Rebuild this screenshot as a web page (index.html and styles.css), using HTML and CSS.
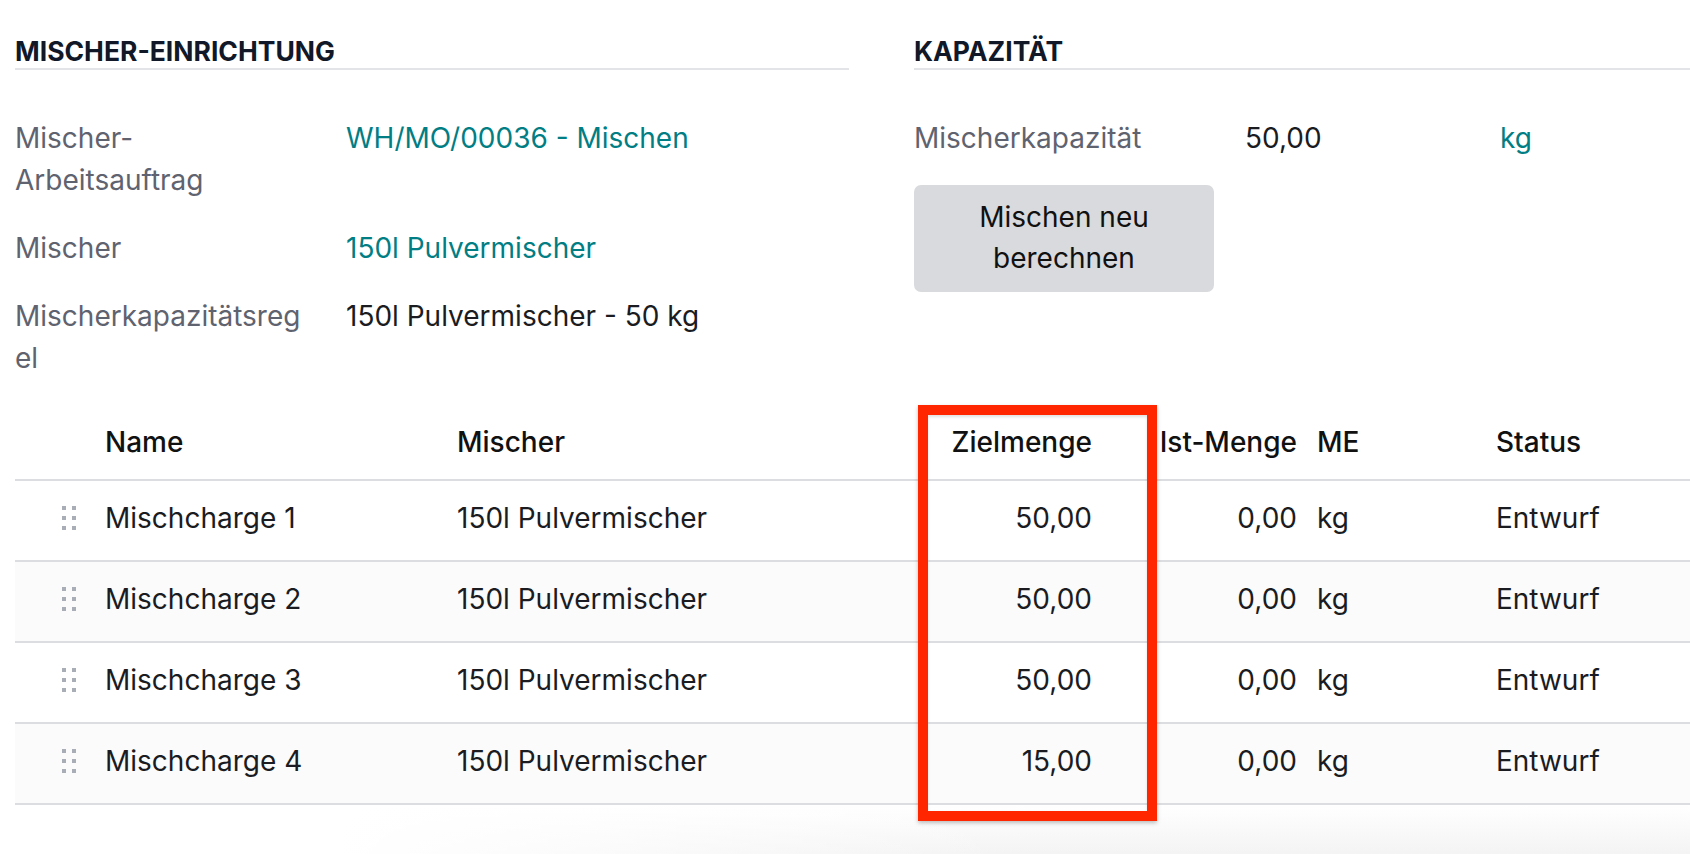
FILE: index.html
```html
<html>
<head>
    <title>Mischer-Einrichtung</title>
    <link rel="stylesheet" href="styles.css">
</head>
<body>
    <div class="sheet">
        <div class="groups">
            <div class="group">
                <h2 class="separator">Mischer-Einrichtung</h2>
                <div class="fields">
                    <div class="label">Mischer-Arbeitsauftrag</div>
                    <div class="value"><a href="#">WH/MO/00036 - Mischen</a></div>
                    <div class="label">Mischer</div>
                    <div class="value"><a href="#">150l Pulvermischer</a></div>
                    <div class="label">Mischerkapazitätsregel</div>
                    <div class="value">150l Pulvermischer - 50 kg</div>
                </div>
            </div>
            <div class="group">
                <h2 class="separator">Kapazität</h2>
                <div class="fields">
                    <div class="label">Mischerkapazität</div>
                    <div class="value capacity">
                        <span class="amount">50,00</span>
                        <a href="#">kg</a>
                    </div>
                </div>
                <button class="btn-secondary">Mischen neu berechnen</button>
            </div>
        </div>

        <div class="lines">
            <table>
                <colgroup>
                    <col style="width: 80px">
                    <col style="width: 352px">
                    <col style="width: 488px">
                    <col style="width: 167px">
                    <col style="width: 205px">
                    <col style="width: 179px">
                    <col style="width: 204px">
                </colgroup>
                <thead>
                    <tr>
                        <th></th>
                        <th>Name</th>
                        <th>Mischer</th>
                        <th class="num">Zielmenge</th>
                        <th class="num">Ist-Menge</th>
                        <th>ME</th>
                        <th>Status</th>
                    </tr>
                </thead>
                <tbody id="rows"></tbody>
            </table>
            <div class="highlight"></div>
        </div>
        <div class="fade"></div>
    </div>
    <script>
        const batches = [
            {name: "Mischcharge 1", target: "50,00"},
            {name: "Mischcharge 2", target: "50,00"},
            {name: "Mischcharge 3", target: "50,00"},
            {name: "Mischcharge 4", target: "15,00"}
        ]
        const handle = '<svg width="14" height="24" viewBox="0 0 14 24">'
            + '<rect x="0" y="0" width="4" height="4"/><rect x="10" y="0" width="4" height="4"/>'
            + '<rect x="0" y="10" width="4" height="4"/><rect x="10" y="10" width="4" height="4"/>'
            + '<rect x="0" y="20" width="4" height="4"/><rect x="10" y="20" width="4" height="4"/>'
            + '</svg>'
        const rows = document.getElementById("rows")
        batches.forEach((batch) => {
            const tr = document.createElement("tr")
            tr.innerHTML = '<td class="handle">' + handle + '</td>'
                + '<td>' + batch.name + '</td>'
                + '<td>150l Pulvermischer</td>'
                + '<td class="num">' + batch.target + '</td>'
                + '<td class="num">0,00</td>'
                + '<td>kg</td>'
                + '<td>Entwurf</td>'
            rows.appendChild(tr)
        })
    </script>
</body>
</html>
```

FILE: styles.css
```css
body {
    margin: 0;
    font-family: "Inter", "Noto Sans", sans-serif;
    font-size: 28px;
    line-height: 42px;
    color: #1a1c21;
    background: #ffffff;
    overflow: hidden;
}
a {
    color: #017e84;
    text-decoration: none;
}
.sheet {
    padding: 34px 0 0 15px;
}
.groups {
    display: grid;
    grid-template-columns: 834px 1fr;
    column-gap: 65px;
}
.separator {
    margin: 0 0 47px 0;
    font-size: 26.5px;
    line-height: 34px;
    font-weight: 700;
    text-transform: uppercase;
    color: #111827;
    border-bottom: 2px solid #e3e4e7;
}
.fields {
    display: grid;
    grid-template-columns: 331px 1fr;
    row-gap: 26px;
}
.label {
    color: #5f636f;
    padding-right: 36px;
    overflow-wrap: anywhere;
}
.capacity {
    display: flex;
}
.capacity .amount {
    width: 255px;
}
.btn-secondary {
    margin-top: 26px;
    width: 300px;
    padding: 12px 20px 13px;
    font-family: inherit;
    font-size: 28px;
    line-height: 41px;
    color: #111111;
    background-color: #d8dadd;
    border: 0;
    border-radius: 7px;
}
.lines {
    position: relative;
    margin-top: 25px;
}
table {
    width: 1675px;
    table-layout: fixed;
    border-collapse: collapse;
    font-size: inherit;
    line-height: inherit;
    color: inherit;
}
th {
    height: 76px;
    padding: 0 10px;
    text-align: left;
    font-weight: 500;
    color: #111111;
    border-bottom: 2px solid #dcdde0;
    white-space: nowrap;
}
td {
    height: 81px;
    padding: 0 10px 6px;
    box-sizing: border-box;
    border-bottom: 2px solid #dcdde0;
    white-space: nowrap;
}
tbody tr:nth-child(even) {
    background-color: #fbfbfc;
}
.num {
    text-align: right;
}
.handle {
    padding-left: 47px;
    line-height: 0;
}
.handle svg {
    display: block;
    fill: #a9aeb6;
}
.highlight {
    position: absolute;
    left: 903px;
    top: 1px;
    width: 239px;
    height: 416px;
    box-sizing: border-box;
    border: 10px solid #ff2600;
    box-shadow: 0 2px 4px rgba(0, 0, 0, 0.25), inset 0 2px 3px rgba(0, 0, 0, 0.12);
}
.fade {
    height: 60px;
    margin-left: -15px;
    background: linear-gradient(to right, #ffffff 20%, rgba(255, 255, 255, 0) 60%), linear-gradient(#ffffff, #f1f1f2);
}
```
